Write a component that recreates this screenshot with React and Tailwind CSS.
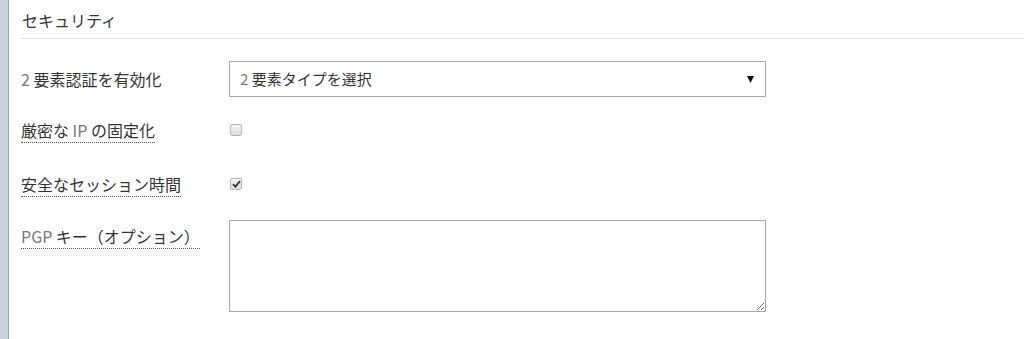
import React from 'react';

const font = { fontFamily: '"Noto Sans CJK JP", "Noto Sans", sans-serif' };

const Lat = ({ children }) => <span className="text-[#777]">{children}</span>;

const Check = ({ checked }) => (
  <span className="flex h-[12px] w-[12px] items-center justify-center rounded-[2px] border border-[#b5b5b5] bg-gradient-to-b from-[#f4f4f4] to-[#dcdcdc]">
    {checked && (
      <svg width="9" height="8" viewBox="0 0 9 8">
        <path d="M1 4.2 L3.4 6.6 L8 1.2" fill="none" stroke="#333" strokeWidth="1.8" />
      </svg>
    )}
  </span>
);

const Label = ({ children, dotted }) => (
  <div className="w-[208px] shrink-0">
    <span
      className={
        'inline-block text-[16px] leading-[24px] text-[#333] ' +
        (dotted ? 'border-b border-dotted border-[#555]' : '')
      }
    >
      {children}
    </span>
  </div>
);

export default function App() {
  return (
    <div className="flex h-[339px] w-[1024px] bg-white" style={font}>
      <div className="w-[9px] shrink-0 border-r border-[#97a3ae] bg-[#c9d3dc]" />
      <div className="flex-1 pl-[12px]">
        {/* Header */}
        <div className="border-b border-[#e6e6e6] pt-[8px] pb-[6px] pl-[1px] text-[16px] leading-[24px] text-[#333]">
          セキュリティ
        </div>

        {/* 2FA */}
        <div className="mt-[22px] flex items-center">
          <Label>
            <Lat>2</Lat> 要素認証を有効化
          </Label>
          <div className="flex h-[36px] w-[537px] items-center justify-between border border-[#a9a9a9] pl-[10px] pr-[11px] text-[15px] text-[#333]">
            <span>
              <Lat>2</Lat> 要素タイプを選択
            </span>
            <svg width="7" height="7" viewBox="0 0 7 7">
              <path d="M0 0 H7 L3.5 7 Z" fill="#111" />
            </svg>
          </div>
        </div>

        {/* Strict IP */}
        <div className="mt-[21px] flex items-center">
          <Label dotted>
            厳密な <Lat>IP</Lat> の固定化
          </Label>
          <div className="pl-[1px] pb-[1px]">
            <Check />
          </div>
        </div>

        {/* Secure session */}
        <div className="mt-[29px] flex items-center">
          <Label dotted>安全なセッション時間</Label>
          <div className="pl-[1px] pb-[1px]">
            <Check checked />
          </div>
        </div>

        {/* PGP */}
        <div className="mt-[23px] flex items-start">
          <div className="mt-[4px]">
            <Label dotted>
              <Lat>PGP</Lat> キー（オプション）
            </Label>
          </div>
          <textarea className="h-[92px] w-[537px] border border-[#a9a9a9] outline-none" />
        </div>
      </div>
    </div>
  );
}
